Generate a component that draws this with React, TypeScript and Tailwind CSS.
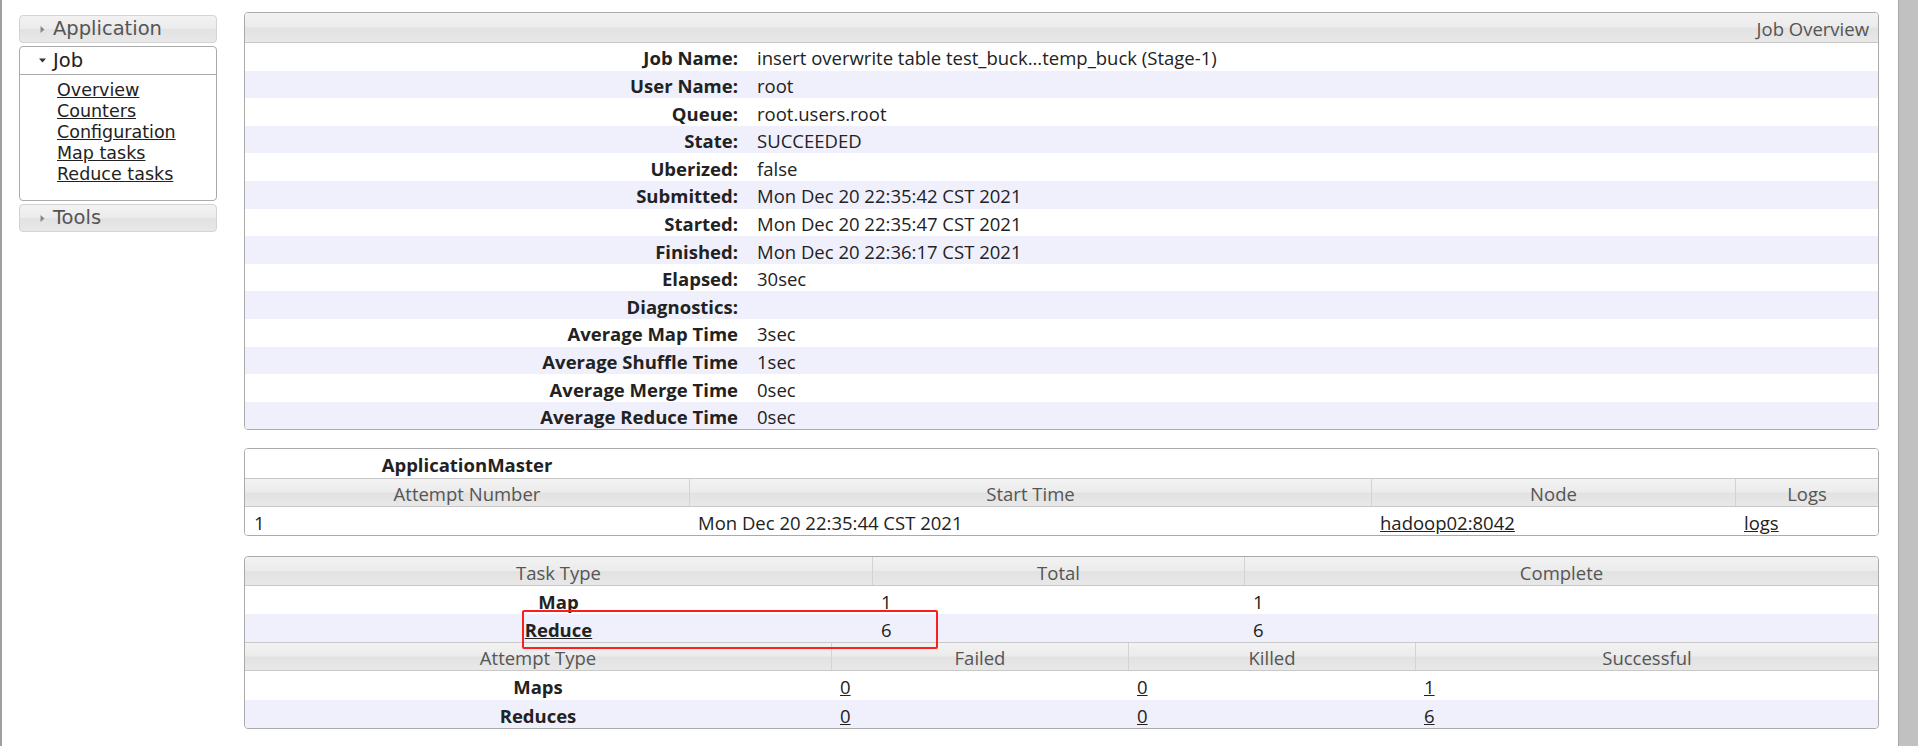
import { FC, ReactNode } from "react";

const HEAD_BG =
  "bg-[linear-gradient(#f2f2f2_0%,#ececec_48%,#e2e2e2_52%,#e8e8e8_100%)]";

const overview: [string, string][] = [
  ["Job Name:", "insert overwrite table test_buck...temp_buck (Stage-1)"],
  ["User Name:", "root"],
  ["Queue:", "root.users.root"],
  ["State:", "SUCCEEDED"],
  ["Uberized:", "false"],
  ["Submitted:", "Mon Dec 20 22:35:42 CST 2021"],
  ["Started:", "Mon Dec 20 22:35:47 CST 2021"],
  ["Finished:", "Mon Dec 20 22:36:17 CST 2021"],
  ["Elapsed:", "30sec"],
  ["Diagnostics:", ""],
  ["Average Map Time", "3sec"],
  ["Average Shuffle Time", "1sec"],
  ["Average Merge Time", "0sec"],
  ["Average Reduce Time", "0sec"],
];

const Arrow: FC<{ open?: boolean }> = ({ open }) =>
  open ? (
    <svg width="9" height="9" viewBox="0 0 9 9" className="shrink-0">
      <polygon points="1,2.5 8,2.5 4.5,6.5" fill="#333" />
    </svg>
  ) : (
    <svg width="9" height="9" viewBox="0 0 9 9" className="shrink-0">
      <polygon points="2.5,1 6.5,4.5 2.5,8" fill="#888" />
    </svg>
  );

const SideHeader: FC<{ label: string }> = ({ label }) => (
  <div
    className={`flex h-[28px] items-center gap-[6px] rounded-[4px] border border-[#d3d3d3] pl-[18px] text-[19.5px] text-[#555] ${HEAD_BG}`}
  >
    <Arrow />
    <span>{label}</span>
  </div>
);

const Sidebar = () => (
  <aside className="ml-[17px] mt-[15px] flex w-[198px] flex-col gap-[3px] font-['DejaVu_Sans',sans-serif]">
    <SideHeader label="Application" />
    <div className="rounded-[4px] border border-[#aaa] bg-white">
      <div className="flex h-[28px] items-center gap-[6px] border-b border-[#aaa] pl-[18px] text-[19.5px] text-[#222]">
        <Arrow open />
        <span>Job</span>
      </div>
      <ul className="flex flex-col pb-[15px] pl-[37px] pt-[5px] text-[17.5px] leading-[21px] text-[#222]">
        {["Overview", "Counters", "Configuration", "Map tasks", "Reduce tasks"].map(
          (l) => (
            <li key={l}>
              <a href="#" className="underline">
                {l}
              </a>
            </li>
          )
        )}
      </ul>
    </div>
    <SideHeader label="Tools" />
  </aside>
);

const Link: FC<{ children: ReactNode }> = ({ children }) => (
  <a href="#" className="text-[#222] underline">
    {children}
  </a>
);

const HeadCell: FC<{ w?: string; children?: ReactNode; first?: boolean }> = ({
  w,
  children,
  first,
}) => (
  <div
    className={`flex items-center justify-center pt-[3px] text-[#555] ${w ?? "flex-1"} ${
      first ? "" : "border-l border-[#d3d3d3]"
    }`}
  >
    {children}
  </div>
);

const JobOverview = () => (
  <section className="overflow-hidden rounded-[4px] border border-[#aaa]">
    <div
      className={`flex h-[30px] items-center justify-end border-b border-[#c8c8c8] pr-[9px] pt-[3px] text-[#555] ${HEAD_BG}`}
    >
      Job Overview
    </div>
    {overview.map(([k, v], i) => (
      <div
        key={k}
        className={`flex h-[27.6px] items-center pt-[3px] ${i % 2 ? "bg-[#f0f0fc]" : "bg-white"}`}
      >
        <div className="w-[500px] pr-[7px] text-right font-bold">{k}</div>
        <div className="pl-[12px]">{v}</div>
      </div>
    ))}
  </section>
);

const AppMaster = () => (
  <section className="overflow-hidden rounded-[4px] border border-[#aaa]">
    <div className="flex h-[29px] items-center bg-white pt-[3px]">
      <div className="w-[444px] text-center font-bold">ApplicationMaster</div>
    </div>
    <div className={`flex h-[29px] border-y border-[#c8c8c8] ${HEAD_BG}`}>
      <HeadCell w="w-[444px]" first>
        Attempt Number
      </HeadCell>
      <HeadCell w="w-[682px]">Start Time</HeadCell>
      <HeadCell w="w-[364px]">Node</HeadCell>
      <HeadCell>Logs</HeadCell>
    </div>
    <div className="flex h-[28px] items-center bg-white pt-[3px]">
      <div className="w-[444px] pl-[9px]">1</div>
      <div className="w-[682px] pl-[9px]">Mon Dec 20 22:35:44 CST 2021</div>
      <div className="w-[364px] pl-[9px]">
        <Link>hadoop02:8042</Link>
      </div>
      <div className="flex-1 pl-[9px]">
        <Link>logs</Link>
      </div>
    </div>
  </section>
);

const Tasks = () => (
  <section className="relative mt-[2px] rounded-[4px] border border-[#aaa]">
    <div className="overflow-hidden rounded-[4px]">
      <div className={`flex h-[29px] border-b border-[#c8c8c8] ${HEAD_BG}`}>
        <HeadCell w="w-[627px]" first>
          Task Type
        </HeadCell>
        <HeadCell w="w-[372px]">Total</HeadCell>
        <HeadCell>Complete</HeadCell>
      </div>
      <div className="flex h-[28px] items-center bg-white pt-[3px]">
        <div className="w-[627px] text-center font-bold">Map</div>
        <div className="w-[372px] pl-[9px]">1</div>
        <div className="flex-1 pl-[9px]">1</div>
      </div>
      <div className="flex h-[28px] items-center bg-[#f0f0fc] pt-[3px]">
        <div className="w-[627px] text-center font-bold">
          <Link>Reduce</Link>
        </div>
        <div className="w-[372px] pl-[9px]">6</div>
        <div className="flex-1 pl-[9px]">6</div>
      </div>
      <div className={`flex h-[29px] border-y border-[#c8c8c8] ${HEAD_BG}`}>
        <HeadCell w="w-[586px]" first>
          Attempt Type
        </HeadCell>
        <HeadCell w="w-[297px]">Failed</HeadCell>
        <HeadCell w="w-[287px]">Killed</HeadCell>
        <HeadCell>Successful</HeadCell>
      </div>
      {[
        ["Maps", "0", "0", "1"],
        ["Reduces", "0", "0", "6"],
      ].map(([name, f, k, s], i) => (
        <div
          key={name}
          className={`flex h-[28.5px] items-center pt-[3px] ${i ? "bg-[#f0f0fc]" : "bg-white"}`}
        >
          <div className="w-[586px] text-center font-bold">{name}</div>
          <div className="w-[297px] pl-[9px]">
            <Link>{f}</Link>
          </div>
          <div className="w-[287px] pl-[9px]">
            <Link>{k}</Link>
          </div>
          <div className="flex-1 pl-[9px]">
            <Link>{s}</Link>
          </div>
        </div>
      ))}
    </div>
    {/* annotation box drawn over the screenshot */}
    <div className="pointer-events-none absolute left-[277px] top-[53px] h-[39px] w-[416px] rounded-[2px] border-[2.5px] border-[#ff1e1e]" />
  </section>
);

export default function App() {
  return (
    <div className="flex h-[746px] w-[1918px] overflow-hidden bg-white">
      <div className="w-[2px] shrink-0 bg-[#a0a0a0]" />
      <Sidebar />
      <main className="ml-[27px] mt-[12px] flex w-[1635px] shrink-0 flex-col gap-[18px] font-['Open_Sans',sans-serif] text-[18.5px] text-[#222]">
        <JobOverview />
        <AppMaster />
        <Tasks />
      </main>
      <div className="ml-auto w-[20px] shrink-0 border-l border-[#a8a8a8] bg-[#c1c1c1]" />
    </div>
  );
}
